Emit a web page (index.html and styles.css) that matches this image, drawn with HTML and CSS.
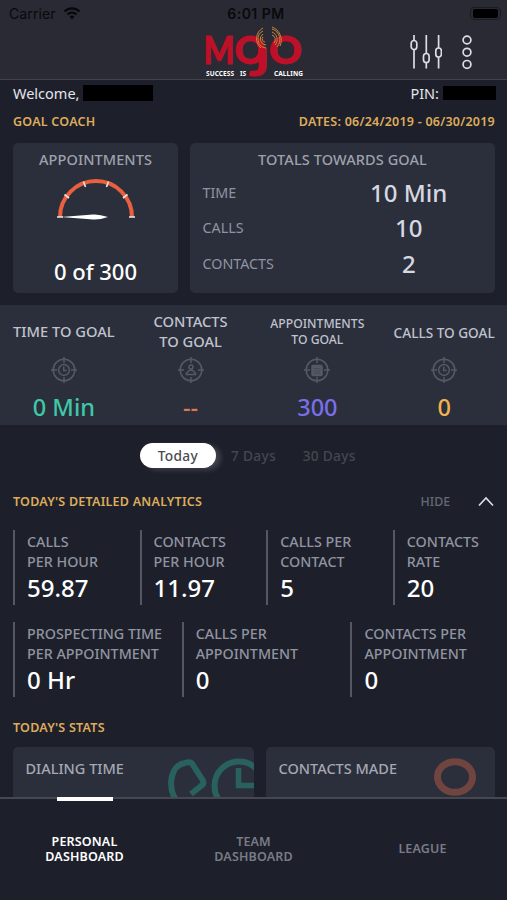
FILE: index.html
```html
<!DOCTYPE html>
<html lang="en">

<head>
    <meta charset="UTF-8">
    <meta name="viewport" content="width=device-width, initial-scale=1.0">
    <link rel="stylesheet" href="styles.css">
    <title>Mojo Dashboard</title>
</head>

<body>
    <header class="header">
        <div class="status-bar">
            <div class="carrier">
                <span>Carrier</span>
                <svg width="18" height="13" viewBox="0 0 18 13" fill="none" stroke="#08090d" stroke-width="2.2">
                    <path d="M1.5 4.6a10.5 10.5 0 0 1 15 0M4.3 7.6a6.6 6.6 0 0 1 9.4 0" />
                    <path d="M6.5 9.8a3.6 3.6 0 0 1 5 0L9 12.5z" fill="#08090d" stroke="none" />
                </svg>
            </div>
            <span class="time">6:01 PM</span>
            <div class="battery"><span></span></div>
        </div>
        <div class="toolbar">
            <svg class="logo" width="102" height="52" viewBox="0 0 102 52">
                <g class="logo-name">
                    <text x="-2.500" y="38" textLength="31" lengthAdjust="spacingAndGlyphs">M</text>
                    <text x="28.500" y="38" textLength="31" lengthAdjust="spacingAndGlyphs">O</text>
                    <text x="43" y="49.500" textLength="20" lengthAdjust="spacingAndGlyphs">J</text>
                    <text x="63" y="38" textLength="33" lengthAdjust="spacingAndGlyphs">O</text>
                </g>
                <g fill="none" stroke="#c9843c" stroke-width="1">
                    <path d="M57 5a9 9 0 0 0 3 17M57 8a6 6 0 0 0 3 11M57 2a12 12 0 0 0-2 20M57 11a3 3 0 0 0 2 5" />
                    <path d="M66 3a11 11 0 0 1 5 18M66 6a8 8 0 0 1 3 13M66 9a5 5 0 0 1 2 8M66 1a14 14 0 0 1 8 19" />
                </g>
                <g class="logo-tagline">
                    <text x="0" y="50" textLength="28">SUCCESS</text>
                    <text x="34" y="50" textLength="6">IS</text>
                    <text x="68" y="50" textLength="29">CALLING</text>
                </g>
            </svg>
            <div class="actions">
                <svg width="32" height="34" viewBox="0 0 32 34" fill="none" stroke="#dcdde3" stroke-width="1.7">
                    <path d="M4 0v5.500M4 14.500V33.500M16.300 0v18.500M16.300 27.500V33.500M28.600 0v13M28.600 22V33.500" />
                    <rect x="1.200" y="5.500" width="5.600" height="9" rx="2.800" />
                    <rect x="13.500" y="18.500" width="5.600" height="9" rx="2.800" />
                    <rect x="25.800" y="13" width="5.600" height="9" rx="2.800" />
                </svg>
                <svg width="12" height="36" viewBox="0 0 12 36" fill="none" stroke="#dcdde3" stroke-width="1.7">
                    <circle cx="6" cy="5" r="3.900" />
                    <circle cx="6" cy="17.200" r="3.900" />
                    <circle cx="6" cy="29.400" r="3.900" />
                </svg>
            </div>
        </div>
    </header>

    <main class="content">
        <div class="welcome">
            <div class="user">Welcome, <span class="redacted name"></span></div>
            <div class="user">PIN: <span class="redacted pin"></span></div>
        </div>

        <div class="section-title coach">
            <h2>GOAL COACH</h2>
            <h2 class="dates">DATES: 06/24/2019 - 06/30/2019</h2>
        </div>

        <div class="coach-cards">
            <div class="card appointments">
                <h3>APPOINTMENTS</h3>
                <svg width="78" height="44" viewBox="0 0 78 44">
                    <path d="M3 39a36 36 0 0 1 72 0" fill="none" stroke="#e8603f" stroke-width="4" />
                    <path d="M0 39h6M72 39h6M7.500 16.500l4.500 3.500M70.500 16.500l-4.500 3.500M26.500 3.500l2 5.500M51.500 3.500l-2 5.500" stroke="#f4e6e2" stroke-width="1.600" />
                    <path d="M4 39L36 36.500q6-.5 15 2.500q-9 3-15 2.500z" fill="#fff" />
                </svg>
                <p class="value">0 of 300</p>
            </div>
            <div class="card totals">
                <h3>TOTALS TOWARDS GOAL</h3>
                <div class="total-row"><span>TIME</span><b>10 Min</b></div>
                <div class="total-row"><span>CALLS</span><b>10</b></div>
                <div class="total-row"><span>CONTACTS</span><b>2</b></div>
            </div>
        </div>

        <div class="goals">
            <div class="goal">
                <h3>TIME TO GOAL</h3>
                <svg class="target" viewBox="0 0 28 28">
                    <circle cx="14" cy="14" r="10.800" />
                    <path d="M14 1v6M14 21v6M1 14h6M21 14h6" />
                    <circle cx="14" cy="14" r="5.400" />
                    <path d="M13.700 10.500v4h3" />
                </svg>
                <p class="green">0 Min</p>
            </div>
            <div class="goal">
                <h3>CONTACTS<br>TO GOAL</h3>
                <svg class="target" viewBox="0 0 28 28">
                    <circle cx="14" cy="14" r="10.800" />
                    <path d="M14 1v6M14 21v6M1 14h6M21 14h6" />
                    <circle cx="14" cy="11" r="2" />
                    <path d="M12.500 14.300h3l3 3v1.300h-9v-1.300z" />
                </svg>
                <p class="orange">--</p>
            </div>
            <div class="goal">
                <h3 class="small">APPOINTMENTS<br>TO GOAL</h3>
                <svg class="target" viewBox="0 0 28 28">
                    <circle cx="14" cy="14" r="10.800" />
                    <path d="M14 1v6M14 21v6M1 14h6M21 14h6" />
                    <rect class="filled" x="9" y="9.500" width="10" height="10" rx="1" />
                    <path class="cells" d="M10.500 12.500h7M10.500 15h7M10.500 17.300h7" />
                </svg>
                <p class="purple">300</p>
            </div>
            <div class="goal">
                <h3 class="medium">CALLS TO GOAL</h3>
                <svg class="target" viewBox="0 0 28 28">
                    <circle cx="14" cy="14" r="10.800" />
                    <path d="M14 1v6M14 21v6M1 14h6M21 14h6" />
                    <circle cx="14" cy="14" r="5.400" />
                    <path d="M13.700 10.500v4h3" />
                </svg>
                <p class="yellow">0</p>
            </div>
        </div>

        <div class="periods">
            <button class="active">Today</button>
            <button>7 Days</button>
            <button>30 Days</button>
        </div>

        <div class="section-title analytics">
            <h2>TODAY'S DETAILED ANALYTICS</h2>
            <div class="toggle">
                <span>HIDE</span>
                <svg width="18" height="12" viewBox="0 0 18 12" fill="none" stroke="#dcdde3" stroke-width="1.700">
                    <path d="M2 10.500l7-7.500L16 10.500" />
                </svg>
            </div>
        </div>

        <div class="metrics four">
            <div class="metric"><span>CALLS<br>PER HOUR</span><b>59.87</b></div>
            <div class="metric"><span>CONTACTS<br>PER HOUR</span><b>11.97</b></div>
            <div class="metric"><span>CALLS PER<br>CONTACT</span><b>5</b></div>
            <div class="metric"><span>CONTACTS<br>RATE</span><b>20</b></div>
        </div>
        <div class="metrics three">
            <div class="metric"><span>PROSPECTING TIME<br>PER APPOINTMENT</span><b>0 Hr</b></div>
            <div class="metric"><span>CALLS PER<br>APPOINTMENT</span><b>0</b></div>
            <div class="metric"><span>CONTACTS PER<br>APPOINTMENT</span><b>0</b></div>
        </div>

        <div class="section-title stats-title">
            <h2>TODAY'S STATS</h2>
        </div>
        <div class="stats">
            <div class="stat">
                <h3>DIALING TIME</h3>
                <svg width="90" height="50" viewBox="0 0 90 50" fill="none" stroke="#28615d" stroke-width="6">
                    <path d="M13 54C3 41 6 18 21 16q6-2 8 2l9 14q3 4-1 7l-10 8" stroke-linejoin="round" />
                    <circle cx="75" cy="39" r="24.500" />
                    <path d="M74.500 21v17.500H90" stroke-width="5.500" />
                </svg>
            </div>
            <div class="stat">
                <h3>CONTACTS MADE</h3>
                <svg width="62" height="50" viewBox="0 0 62 50" fill="none" stroke="#70443f" stroke-width="7">
                    <ellipse cx="22" cy="30" rx="17.500" ry="15.300" />
                </svg>
            </div>
        </div>
    </main>

    <nav class="nav">
        <a class="active">PERSONAL<br>DASHBOARD</a>
        <a>TEAM<br>DASHBOARD</a>
        <a>LEAGUE</a>
    </nav>
</body>

</html>
```
FILE: styles.css
```css
* {
    box-sizing: border-box;
}

body {
    font-family: "Noto Sans", sans-serif;
    font-weight: 500;
    margin: 0;
    height: 900px;
    display: flex;
    flex-direction: column;
    overflow: hidden;
    background-color: #1d202b;
    color: #fff;
}

h2,
h3,
p {
    margin: 0;
    font-weight: 500;
}

b {
    font-weight: 500;
}

/* Header */
.header {
    height: 80px;
    flex-shrink: 0;
    background-color: #292a33;
    border-bottom: 1px solid #41434c;
}

.status-bar {
    height: 26px;
    padding: 1px 6px 0 9px;
    display: grid;
    grid-template-columns: 1fr auto 1fr;
    align-items: center;
    font-family: Inter, sans-serif;
    font-size: 14px;
    color: #08090d;
}

.carrier {
    display: flex;
    align-items: center;
    gap: 7px;
    font-weight: 400;
    letter-spacing: 0.1px;
}

.time {
    padding-left: 2px;
    font-weight: 600;
    letter-spacing: 0.5px;
}

.battery {
    justify-self: end;
    width: 31px;
    height: 13px;
    padding: 1px 2px;
    border: 1px solid #1b1c22;
    border-radius: 4px;
}

.battery span {
    display: block;
    height: 100%;
    background-color: #000;
    border-radius: 2px;
}

.toolbar {
    height: 52px;
    padding: 0 34px 0 205.500px;
    display: flex;
    justify-content: space-between;
}

.logo {
    overflow: visible;
}

.logo-name {
    font-family: Lato, sans-serif;
    font-weight: 900;
    font-size: 37px;
    fill: #be1029;
    stroke: #be1029;
    stroke-width: 0.9;
}

.logo-tagline {
    font-size: 6.5px;
    font-weight: 700;
    fill: #fff;
}

.actions {
    display: flex;
    align-items: flex-start;
    gap: 19px;
    padding-top: 9px;
}

/* Welcome */
.welcome {
    height: 26px;
    padding: 0 11px 0 13px;
    display: flex;
    justify-content: space-between;
    align-items: center;
    font-size: 14.5px;
    font-weight: 450;
    color: #e4e5ea;
}

.user {
    display: flex;
    align-items: center;
    gap: 4px;
}

.redacted {
    background-color: #000;
    width: 70px;
    height: 16px;
}

.pin {
    width: 53px;
    height: 14px;
}

.section-title {
    display: flex;
    justify-content: space-between;
    align-items: center;
    padding: 0 12px 0 13px;
}

.section-title h2 {
    font-size: 12.5px;
    font-weight: 600;
    letter-spacing: 0.24px;
    color: #dfac5b;
}

.coach {
    height: 30px;
    margin-bottom: 7px;
}

/* Goal coach cards */
.coach-cards {
    height: 150px;
    padding: 0 12px 0 13px;
    display: grid;
    grid-template-columns: 165px 1fr;
    gap: 12px;
}

.card {
    background-color: #2b2f3b;
    border-radius: 5px;
    padding-top: 6px;
}

.card h3 {
    font-size: 14.5px;
    line-height: 20px;
    letter-spacing: 0.1px;
    text-align: center;
    color: #9ea1ac;
}

.appointments {
    display: flex;
    flex-direction: column;
    align-items: center;
}

.appointments svg {
    margin-top: 9px;
}

.appointments .value {
    margin-top: 34px;
    font-size: 22px;
    line-height: 30px;
}

.totals h3 {
    margin-bottom: 6px;
}

.total-row {
    height: 35.300px;
    padding: 0 0 0 12.500px;
    display: grid;
    grid-template-columns: 120px 1fr;
    align-items: center;
}

.total-row span {
    font-size: 14.3px;
    font-weight: 400;
    color: #9093a0;
}

.total-row b {
    font-size: 24px;
    text-align: center;
    color: #d5d7e1;
}

/* Goals strip */
.goals {
    height: 120px;
    margin-top: 12px;
    background-color: #2b2f3b;
    display: grid;
    grid-template-columns: repeat(4, 1fr);
}

.goal {
    display: flex;
    flex-direction: column;
    align-items: center;
    padding-left: 1px;
}

.goal h3 {
    height: 51px;
    padding-top: 1px;
    display: flex;
    align-items: center;
    text-align: center;
    font-size: 14.7px;
    line-height: 20px;
    color: #c0c3ce;
}

.goal .small {
    font-size: 12.2px;
    line-height: 16px;
    padding-top: 2px;
}

.goal .medium {
    font-size: 13.6px;
    padding-top: 4px;
}

.target {
    width: 28px;
    height: 28px;
    fill: none;
    stroke: #555963;
    stroke-width: 1.5;
}

.target .filled {
    fill: #555963;
}

.target .cells {
    stroke: #444852;
    stroke-width: 0.8;
}

.goal p {
    font-size: 23.5px;
    line-height: 32px;
    margin-top: 7px;
}

.green {
    color: #3fc8a7;
}

.orange {
    color: #dc7856;
}

.purple {
    color: #796eea;
}

.yellow {
    color: #f1b24e;
}

/* Period switch */
.periods {
    height: 61px;
    padding-left: 140px;
    display: flex;
    align-items: center;
}

.periods button {
    width: 75.700px;
    height: 25px;
    padding: 0;
    border: none;
    background: none;
    font-family: "Noto Sans", sans-serif;
    font-size: 13.7px;
    font-weight: 500;
    letter-spacing: 0.3px;
    color: #45474f;
}

.periods .active {
    border-radius: 13px;
    background-color: #fff;
    box-shadow: 5px 2px 5px rgba(255, 255, 255, 0.15);
    color: #4a4b50;
}

/* Analytics */
.analytics {
    height: 30px;
    margin-bottom: 14px;
}

.toggle {
    display: flex;
    align-items: center;
    gap: 27px;
    font-size: 12.3px;
    color: #666974;
}

.metrics {
    display: grid;
    margin: 0 -12px 18px 13px;
}

.four {
    grid-template-columns: repeat(4, 126.600px);
    margin-bottom: 17px;
}

.three {
    grid-template-columns: repeat(3, 168.700px);
}

.metric {
    height: 75px;
    border-left: 2px solid #555861;
    padding: 2px 0 0 12px;
}

.metric span {
    display: block;
    font-size: 14.3px;
    line-height: 20px;
    color: #9194a0;
}

.metric b {
    display: block;
    font-size: 24px;
    line-height: 32px;
}

.stats-title {
    height: 24px;
    margin-bottom: 8px;
}

.stats {
    height: 51px;
    padding: 0 12px 0 13px;
    display: grid;
    grid-template-columns: 241px 1fr;
    gap: 12px;
    overflow: hidden;
}

.stat {
    background-color: #2b2f3b;
    border-radius: 5px 5px 0 0;
    padding-left: 12.500px;
    display: flex;
    justify-content: space-between;
    overflow: hidden;
}

.stat h3 {
    padding-top: 11px;
    font-size: 14.5px;
    line-height: 20px;
    color: #a5a8b3;
}

.stat svg {
    flex-shrink: 0;
}

/* Bottom navigation */
.nav {
    flex: 1;
    margin-top: -1px;
    border-top: 2px solid #454851;
    background-color: #1d202b;
    display: grid;
    grid-template-columns: repeat(3, 1fr);
    align-items: center;
    padding-bottom: 2px;
}

.nav a {
    position: relative;
    font-size: 12.5px;
    line-height: 15px;
    font-weight: 600;
    text-align: center;
    letter-spacing: 0.15px;
    color: #797c86;
}

.nav .active {
    color: #fff;
}

.nav .active::before {
    content: "";
    position: absolute;
    top: -37px;
    left: 57px;
    width: 56px;
    height: 4px;
    background-color: #fff;
}
```
